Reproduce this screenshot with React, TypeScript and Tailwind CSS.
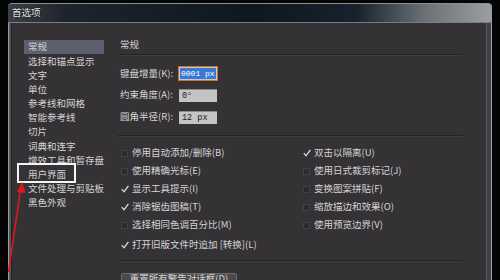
import React from "react";

const FONT = { fontFamily: '"Noto Sans CJK SC", "Noto Sans", sans-serif' };

const listItems = [
  "常规",
  "选择和锚点显示",
  "文字",
  "单位",
  "参考线和网格",
  "智能参考线",
  "切片",
  "词典和连字",
  "增效工具和暂存盘",
  "用户界面",
  "文件处理与剪贴板",
  "黑色外观",
];

function Check({ checked }: { checked: boolean }) {
  return (
    <div className="w-[11px] h-[18px] flex items-center">
      {checked ? (
        <svg width="8" height="8" viewBox="0 0 8 8">
          <path d="M0.8 4.2 L3 6.8 L7.4 0.8" fill="none" stroke="#e2e2e2" strokeWidth="1.3" />
        </svg>
      ) : (
        <div className="w-[7px] h-[7px] bg-[#2c2b2c] border border-[#434143]" />
      )}
    </div>
  );
}

function CheckRow({ checked, label }: { checked: boolean; label: string }) {
  return (
    <div className="flex items-center h-[18px]">
      <Check checked={checked} />
      <span className="leading-none whitespace-nowrap">{label}</span>
    </div>
  );
}

function Divider() {
  return <div className="w-[345px] h-[2px] border-t border-[#242324] border-b border-b-[#403e40]" />;
}

export default function App() {
  const left = [
    { c: false, t: "停用自动添加/删除(B)" },
    { c: false, t: "使用精确光标(E)" },
    { c: true, t: "显示工具提示(I)" },
    { c: true, t: "消除锯齿图稿(T)" },
    { c: false, t: "选择相同色调百分比(M)" },
  ];
  const right = [
    { c: true, t: "双击以隔离(U)" },
    { c: false, t: "使用日式裁剪标记(J)" },
    { c: false, t: "变换图案拼贴(F)" },
    { c: false, t: "缩放描边和效果(O)" },
    { c: false, t: "使用预览边界(V)" },
  ];
  return (
    <div
      className="relative w-[500px] h-[280px] overflow-hidden bg-[#050505] pt-[3px] pl-[8px] pr-[8px] text-[9.5px] text-[#d4d4d4]"
      style={FONT}
    >
      <div className="flex flex-col h-[300px]">
        {/* title bar */}
        <div className="h-[19px] rounded-t-[4px] border-t border-[#8a8f94] bg-[linear-gradient(to_right,#3c3f46_0%,#1e242c_12%,#0f1720_50%,#17222c_72%,#6a7176_86%,#9a9fa2_100%)] flex items-center pl-[4px]">
          <span className="leading-none text-[#e4e4e4] [text-shadow:0_0_2px_#000]">首选项</span>
        </div>
        {/* body */}
        <div className="flex flex-1 border-t border-[#7a7d80]">
          <div className="w-[4px] border-l border-[#9a9da0] bg-[#54585e] border-r border-r-[#1e1e1e]" />
          <div className="flex-1 bg-[#343234] flex pt-[17px]">
            {/* list */}
            <div className="ml-[12px] w-[80px] flex flex-col">
              {listItems.map((t, i) => (
                <div
                  key={t}
                  className={`h-[14.2px] flex items-center pl-[4px] whitespace-nowrap ${i === 0 ? "bg-[#5c606e]" : ""}`}
                >
                  <span className="leading-none">{t}</span>
                </div>
              ))}
            </div>
            {/* right panel */}
            <div className="ml-[14px] w-[345px] flex flex-col">
              <div className="h-[10px] flex items-center pl-[2px]">
                <span className="leading-none">常规</span>
              </div>
              <div className="mt-[4px]">
                <Divider />
              </div>
              {/* fields */}
              <div className="mt-[10px] flex items-center pl-[2px] h-[15px]">
                <span className="w-[58px] leading-none whitespace-nowrap">键盘增量(K):</span>
                <div className="w-[40px] h-[15px] border border-[#c8742c] bg-[#c9c9c9] p-[1px]">
                  <div
                    className="h-full bg-[#3a78d8] text-white text-[8px] leading-[11px] pl-[1px] whitespace-nowrap overflow-hidden"
                    style={{ fontFamily: '"Liberation Mono", monospace' }}
                  >
                    0001 px
                  </div>
                </div>
              </div>
              <div className="mt-[7px] flex items-center pl-[2px] h-[14px]">
                <span className="w-[59px] leading-none whitespace-nowrap">约束角度(A):</span>
                <div
                  className="w-[38px] h-[13px] bg-[#c4c4c4] border-t border-[#8a8a8a] text-[#1c1c1c] text-[8.5px] leading-[12px] pl-[3px] whitespace-nowrap"
                  style={{ fontFamily: '"Liberation Mono", monospace' }}
                >
                  0°
                </div>
              </div>
              <div className="mt-[8px] flex items-center pl-[2px] h-[14px]">
                <span className="w-[59px] leading-none whitespace-nowrap">圆角半径(R):</span>
                <div
                  className="w-[38px] h-[13px] bg-[#c4c4c4] border-t border-[#8a8a8a] text-[#1c1c1c] text-[8.5px] leading-[12px] pl-[3px] whitespace-nowrap"
                  style={{ fontFamily: '"Liberation Mono", monospace' }}
                >
                  12 px
                </div>
              </div>
              <div className="mt-[11px]">
                <Divider />
              </div>
              {/* checkboxes */}
              <div className="mt-[7px] grid grid-cols-[182px_1fr] pl-[3px]">
                <div className="flex flex-col">
                  {left.map((r) => (
                    <CheckRow key={r.t} checked={r.c} label={r.t} />
                  ))}
                </div>
                <div className="flex flex-col">
                  {right.map((r) => (
                    <CheckRow key={r.t} checked={r.c} label={r.t} />
                  ))}
                </div>
              </div>
              <div className="mt-[2px] pl-[3px]">
                <CheckRow checked={true} label="打开旧版文件时追加 [转换](L)" />
              </div>
              <div className="mt-[6px]">
                <Divider />
              </div>
              <div className="mt-[11px] pl-[3px]">
                <div className="w-[116px] h-[18px] rounded-[2px] border border-[#6a686a] bg-[linear-gradient(to_bottom,#4e4c4e,#3c3a3c)] flex justify-center">
                  <span className="leading-none whitespace-nowrap">重置所有警告对话框(D)</span>
                </div>
              </div>
            </div>
          </div>
          <div className="w-[6px] border-l border-[#58585a] bg-[#3e4248] border-r border-r-[#a4a6a8]" />
        </div>
      </div>

      {/* annotation: white highlight box */}
      <div className="absolute left-[17px] top-[163px] w-[59px] h-[20px] border-2 border-[#f4f4f4]" />
      {/* annotation: red arrow */}
      <svg className="absolute left-0 top-0" width="500" height="280" viewBox="0 0 500 280">
        <line x1="8.5" y1="272" x2="20.5" y2="190" stroke="#e01818" strokeWidth="1.6" />
        <polygon points="22,182 17,192 25.5,193" fill="#e01818" />
      </svg>
    </div>
  );
}
